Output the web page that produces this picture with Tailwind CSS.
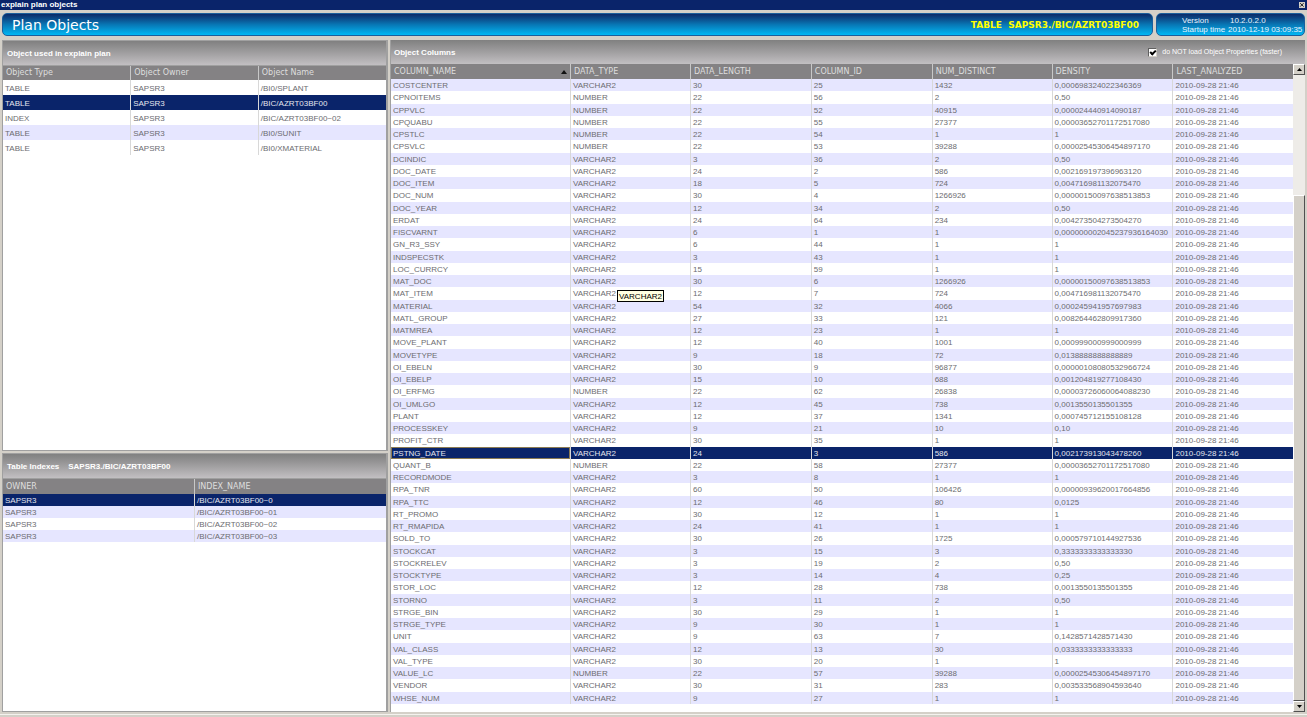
<!DOCTYPE html>
<html lang="en">
<head>
<meta charset="utf-8">
<title>explain plan objects</title>
<script src="https://cdn.jsdelivr.net/npm/@tailwindcss/browser@4"></script>
</head>
<body class="h-screen overflow-hidden flex flex-col bg-[#d4d0c8] font-['Liberation_Sans',sans-serif] text-[8px] leading-[12px] text-[#6c6c70]">

<header class="h-[10px] shrink-0 flex items-center justify-between bg-[#0a246a] pl-px pr-[2px]">
  <h1 class="leading-[10px] font-bold text-white">explain plan objects</h1>
  <button aria-label="Close" class="size-[6px] bg-[#d4d0c8] grid place-items-center">
    <svg class="size-[6px]" viewBox="0 0 6 6" stroke="#222" stroke-width="1"><path d="M1.2 1.2l3.4 3.4M4.6 1.2L1.2 4.6"/></svg>
  </button>
</header>

<div class="h-[23px] shrink-0 mt-[3px] px-[2px] flex gap-[3px]">
  <div class="flex-1 flex items-center justify-between rounded-[5px] border border-[#1b5f9c] bg-linear-to-b from-[#0b2a68] via-[#0876b4] to-[#00b8f4] pl-[9px] pr-[13px]">
    <h2 class="font-['DejaVu_Sans',sans-serif] text-[14px] leading-[20px] text-white">Plan Objects</h2>
    <p class="font-['DejaVu_Sans',sans-serif] text-[9px] font-bold text-[#ffff00] whitespace-pre">TABLE  SAPSR3./BIC/AZRT03BF00</p>
  </div>
  <dl class="w-[149px] grid grid-cols-[46px_1fr] content-center rounded-[5px] border border-[#1b5f9c] bg-linear-to-b from-[#0b2a68] via-[#0876b4] to-[#00b8f4] pl-[25px] leading-[9px] text-[#e8f4ff] whitespace-nowrap">
    <dt>Version</dt><dd class="pl-[2px]">10.2.0.2.0</dd>
    <dt>Startup time</dt><dd>2010-12-19 03:09:35</dd>
  </dl>
</div>

<main class="flex-1 min-h-0 mt-[4px] px-[2px] grid grid-cols-[386fr_915fr] gap-[2px]">
  <div class="min-h-0 flex flex-col gap-[2px]">
    <section class="h-[411px] border border-[#a0a0a0] border-r-2 bg-white">
      <h3 class="h-[25px] flex items-center bg-linear-to-b from-[#808080] to-[#c2bfc2] pl-1 pt-px font-bold text-white border-b border-[#a0a0a0]">Object used in explain plan</h3>
      <table class="w-full table-fixed border-collapse">
        <colgroup><col class="w-1/3"><col class="w-1/3"><col></colgroup>
        <thead><tr class="h-[14px] bg-[#848284] text-[#dedede] text-left font-['DejaVu_Sans',sans-serif]">
          <th class="p-0 pl-[3px] font-normal border-r border-[#c8c8c8]">Object Type</th><th class="p-0 pl-[3px] font-normal border-r border-[#c8c8c8]">Object Owner</th><th class="p-0 pl-[3px] font-normal">Object Name</th></tr></thead>
        <tbody id="objects"></tbody>
      </table>
    </section>
    <section class="flex-1 border border-[#a0a0a0] border-r-2 bg-white">
      <h3 class="h-[25px] flex items-center bg-linear-to-b from-[#808080] to-[#c2bfc2] pl-1 pt-px font-bold text-white border-b border-[#a0a0a0] whitespace-pre">Table Indexes    SAPSR3./BIC/AZRT03BF00</h3>
      <table class="w-full table-fixed border-collapse">
        <colgroup><col class="w-[50%]"><col></colgroup>
        <thead><tr class="h-[15px] bg-[#848284] text-[#dedede] text-left font-['DejaVu_Sans',sans-serif]">
          <th class="p-0 pl-[3px] pt-px font-normal border-r border-[#c8c8c8]">OWNER</th><th class="p-0 pl-[3px] pt-px font-normal">INDEX_NAME</th></tr></thead>
        <tbody id="indexes"></tbody>
      </table>
    </section>
  </div>

  <section class="min-h-0 flex flex-col bg-white border-l border-[#a0a0a0]">
    <div class="h-[24px] shrink-0 flex items-center justify-between bg-linear-to-b from-[#808080] to-[#c2bfc2] pl-[3px] pr-[23px] text-white">
      <h3 class="font-bold pt-[2px]">Object Columns</h3>
      <label class="flex items-center gap-[5px] text-[7px]">
        <input type="checkbox" checked class="appearance-none size-[9px] bg-white border border-t-[#606060] border-l-[#606060] border-[#d4d0c8] grid place-items-center before:content-[''] before:w-[4px] before:h-[6px] before:mb-px before:border-black before:border-r-2 before:border-b-2 before:rotate-45">
        do NOT load Object Properties (faster)
      </label>
    </div>
    <div class="flex-1 min-h-0 flex">
      <div class="relative flex-1 pb-[8px]">
        <table class="w-full h-full table-fixed border-collapse">
          <colgroup><col class="w-[19.9%]"><col class="w-[13.3%]"><col class="w-[13.4%]"><col class="w-[13.4%]"><col class="w-[13.3%]"><col class="w-[13.4%]"><col></colgroup>
          <thead><tr class="h-[15px] bg-[#848284] text-[#dedede] text-left font-['DejaVu_Sans',sans-serif]">
            <th class="p-0 pl-[3px] font-normal border-r border-[#c8c8c8]"><span class="flex items-center justify-between pr-[3px]">COLUMN_NAME<svg class="w-[6px] h-[4px]" viewBox="0 0 6 4" fill="#111"><path d="M3 0l3 4H0z"/></svg></span></th>
            <th class="p-0 pl-[3px] font-normal border-r border-[#c8c8c8]">DATA_TYPE</th>
            <th class="p-0 pl-[3px] font-normal border-r border-[#c8c8c8]">DATA_LENGTH</th>
            <th class="p-0 pl-[3px] font-normal border-r border-[#c8c8c8]">COLUMN_ID</th>
            <th class="p-0 pl-[3px] font-normal border-r border-[#c8c8c8]">NUM_DISTINCT</th>
            <th class="p-0 pl-[3px] font-normal border-r border-[#c8c8c8]">DENSITY</th>
            <th class="p-0 pl-[3px] font-normal">LAST_ANALYZED</th></tr></thead>
          <tbody id="columns"></tbody>
        </table>
        <div role="tooltip" class="absolute left-[226px] top-[226px] border border-black bg-[#ffffe1] px-px h-[12px] leading-[11px] text-black">VARCHAR2</div>
      </div>
      <div class="w-[12px] shrink-0 flex flex-col bg-[#eeece8]">
        <button aria-label="Scroll up" class="h-[11px] bg-[#d4d0c8] border border-t-white border-l-white border-r-[#505050] border-b-[#505050] grid place-items-center"><svg class="w-[5px] h-[3px]" viewBox="0 0 5 3"><path d="M2.5 0L5 3H0z"/></svg></button>
        <div class="h-[120px]"></div>
        <div class="flex-1 bg-[#d4d0c8] border border-t-white border-l-white border-r-[#505050] border-b-[#505050]"></div>
        <button aria-label="Scroll down" class="h-[11px] bg-[#d4d0c8] border border-t-white border-l-white border-r-[#505050] border-b-[#505050] grid place-items-center"><svg class="w-[5px] h-[3px]" viewBox="0 0 5 3"><path d="M2.5 3L5 0H0z"/></svg></button>
      </div>
    </div>
  </section>
</main>
<footer class="h-[5px] shrink-0 flex items-center"><div class="h-px flex-1 bg-[#f4f2ee]"></div></footer>

<script>
const V = "VARCHAR2", N = "NUMBER";
const columns = [
["COSTCENTER",V,30,25,1432,"0,000698324022346369"],
["CPNOITEMS",N,22,56,2,"0,50"],
["CPPVLC",N,22,52,40915,"0,000024440914090187"],
["CPQUABU",N,22,55,27377,"0,00003652701172517080"],
["CPSTLC",N,22,54,1,"1"],
["CPSVLC",N,22,53,39288,"0,00002545306454897170"],
["DCINDIC",V,3,36,2,"0,50"],
["DOC_DATE",V,24,2,586,"0,002169197396963120"],
["DOC_ITEM",V,18,5,724,"0,004716981132075470"],
["DOC_NUM",V,30,4,1266926,"0,00000150097638513853"],
["DOC_YEAR",V,12,34,2,"0,50"],
["ERDAT",V,24,64,234,"0,004273504273504270"],
["FISCVARNT",V,6,1,1,"0,000000002045237936164030"],
["GN_R3_SSY",V,6,44,1,"1"],
["INDSPECSTK",V,3,43,1,"1"],
["LOC_CURRCY",V,15,59,1,"1"],
["MAT_DOC",V,30,6,1266926,"0,00000150097638513853"],
["MAT_ITEM",V,12,7,724,"0,004716981132075470"],
["MATERIAL",V,54,32,4066,"0,000245941957697983"],
["MATL_GROUP",V,27,33,121,"0,008264462809917360"],
["MATMREA",V,12,23,1,"1"],
["MOVE_PLANT",V,12,40,1001,"0,000999000999000999"],
["MOVETYPE",V,9,18,72,"0,0138888888888889"],
["OI_EBELN",V,30,9,96877,"0,00000108080532966724"],
["OI_EBELP",V,15,10,688,"0,001204819277108430"],
["OI_ERFMG",N,22,62,26838,"0,00003726060064088230"],
["OI_UMLGO",V,12,45,738,"0,0013550135501355"],
["PLANT",V,12,37,1341,"0,000745712155108128"],
["PROCESSKEY",V,9,21,10,"0,10"],
["PROFIT_CTR",V,30,35,1,"1"],
["PSTNG_DATE",V,24,3,586,"0,002173913043478260"],
["QUANT_B",N,22,58,27377,"0,00003652701172517080"],
["RECORDMODE",V,3,8,1,"1"],
["RPA_TNR",V,60,50,106426,"0,00000939620017664856"],
["RPA_TTC",V,12,46,80,"0,0125"],
["RT_PROMO",V,30,12,1,"1"],
["RT_RMAPIDA",V,24,41,1,"1"],
["SOLD_TO",V,30,26,1725,"0,000579710144927536"],
["STOCKCAT",V,3,15,3,"0,3333333333333330"],
["STOCKRELEV",V,3,19,2,"0,50"],
["STOCKTYPE",V,3,14,4,"0,25"],
["STOR_LOC",V,12,28,738,"0,0013550135501355"],
["STORNO",V,3,11,2,"0,50"],
["STRGE_BIN",V,30,29,1,"1"],
["STRGE_TYPE",V,9,30,1,"1"],
["UNIT",V,9,63,7,"0,1428571428571430"],
["VAL_CLASS",V,12,13,30,"0,0333333333333333"],
["VAL_TYPE",V,30,20,1,"1"],
["VALUE_LC",N,22,57,39288,"0,00002545306454897170"],
["VENDOR",V,30,31,283,"0,003533568904593640"],
["WHSE_NUM",V,9,27,1,"1"]
].map(r => [...r, "2010-09-28 21:46"]);
const objects = [["TABLE","SAPSR3","/BI0/SPLANT"],["TABLE","SAPSR3","/BIC/AZRT03BF00"],["INDEX","SAPSR3","/BIC/AZRT03BF00~02"],["TABLE","SAPSR3","/BI0/SUNIT"],["TABLE","SAPSR3","/BI0/XMATERIAL"]];
const indexes = ["~0","~01","~02","~03"].map(s => ["SAPSR3","/BIC/AZRT03BF00"+s]);
function fill(id, rows, selected, shaded, height) {
  document.getElementById(id).innerHTML = rows.map((r, i) => {
    const bg = i === selected ? "bg-[#0a246a] text-[#e4e4ee]" : i % 2 === shaded ? "bg-[#e6e6ff]" : "bg-white";
    return `<tr class="${bg} ${height}">` + r.map((c, j) =>
      `<td class="p-0 pl-[2px] pt-px leading-[11px] whitespace-nowrap ${j < r.length - 1 ? "border-r border-[#d8d8d8]" : ""} ${id === "columns" && i === selected && j === 0 ? "outline outline-[#8a7a52] -outline-offset-1" : ""}">${c}</td>`).join("") + "</tr>";
  }).join("");
}
fill("objects", objects, 1, 1, "h-[15px]");
fill("indexes", indexes, 0, 1, "h-[12px]");
fill("columns", columns, 30, 0, "h-auto");
</script>
</body>
</html>
